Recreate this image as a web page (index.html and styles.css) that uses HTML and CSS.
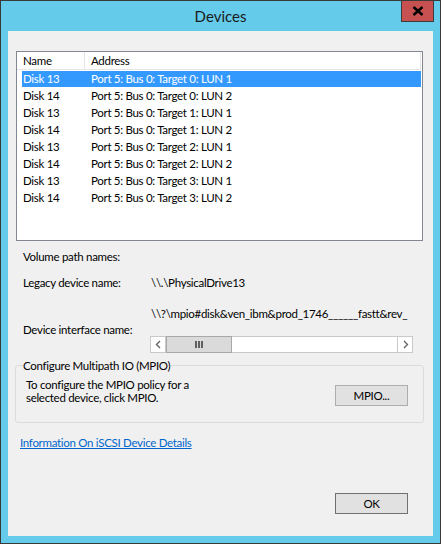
FILE: index.html
```html
<!DOCTYPE html>
<html>
<head>
<meta charset="utf-8">
<link rel="stylesheet" href="styles.css">
</head>
<body>
<div class="window">
  <div class="titlebar">
    <span class="title">Devices</span>
    <div class="close">
      <svg width="12" height="10" viewBox="0 0 12 10"><path d="M1.5 1 L10.5 9 M10.5 1 L1.5 9" stroke="#000" stroke-width="2.4" fill="none"/></svg>
    </div>
  </div>
  <div class="client">
    <div class="list">
      <div class="lv-head">
        <div class="hc c1">Name</div>
        <div class="hc c2">Address</div>
      </div>
      <div class="lv-body">
        <div class="row sel"><span class="n">Disk 13</span><span class="a">Port 5: Bus 0: Target 0: LUN 1</span></div>
        <div class="row"><span class="n">Disk 14</span><span class="a">Port 5: Bus 0: Target 0: LUN 2</span></div>
        <div class="row"><span class="n">Disk 13</span><span class="a">Port 5: Bus 0: Target 1: LUN 1</span></div>
        <div class="row"><span class="n">Disk 14</span><span class="a">Port 5: Bus 0: Target 1: LUN 2</span></div>
        <div class="row"><span class="n">Disk 13</span><span class="a">Port 5: Bus 0: Target 2: LUN 1</span></div>
        <div class="row"><span class="n">Disk 14</span><span class="a">Port 5: Bus 0: Target 2: LUN 2</span></div>
        <div class="row"><span class="n">Disk 13</span><span class="a">Port 5: Bus 0: Target 3: LUN 1</span></div>
        <div class="row"><span class="n">Disk 14</span><span class="a">Port 5: Bus 0: Target 3: LUN 2</span></div>
      </div>
    </div>

    <div class="lbl vol">Volume path names:</div>

    <div class="kv legacy">
      <span class="k">Legacy device name:</span>
      <span class="v">\\.\PhysicalDrive13</span>
    </div>

    <div class="kv devif">
      <span class="k">Device interface name:</span>
      <div class="vcol">
        <div class="v clip">\\?\mpio#disk&amp;ven_ibm&amp;prod_1746______fastt&amp;rev_</div>
        <div class="hscroll">
          <div class="sb-btn">
            <svg width="7" height="9" viewBox="0 0 7 9"><path d="M5 1 L1.5 4.5 L5 8" stroke="#606060" stroke-width="1.3" fill="none"/></svg>
          </div>
          <div class="thumb">
            <span class="grip"></span><span class="grip"></span><span class="grip"></span>
          </div>
          <div class="track"></div>
          <div class="sb-btn right">
            <svg width="7" height="9" viewBox="0 0 7 9"><path d="M2 1 L5.5 4.5 L2 8" stroke="#606060" stroke-width="1.3" fill="none"/></svg>
          </div>
        </div>
      </div>
    </div>

    <fieldset class="group">
      <legend>Configure Multipath IO (MPIO)</legend>
      <div class="grp-body">
        <p class="grp-text">To configure the MPIO policy for a<br>selected device, click MPIO.</p>
        <button class="btn mpio">MPIO...</button>
      </div>
    </fieldset>

    <a class="link" href="#">Information On iSCSI Device Details</a>

    <button class="btn ok">OK</button>
  </div>
</div>
</body>
</html>
```

FILE: styles.css
```css
* { box-sizing: border-box; }

html, body {
  margin: 0;
  padding: 0;
  width: 441px;
  height: 544px;
  overflow: hidden;
}

body {
  font-family: "Lato", "Liberation Sans", sans-serif;
  font-size: 11.5px;
  letter-spacing: -0.3px;
  color: #000;
}

.window {
  width: 441px;
  height: 544px;
  border: 1px solid #3a3a3a;
  background: #65cbea;
  display: flex;
  flex-direction: column;
  position: relative;
}

.titlebar {
  height: 30px;
  display: flex;
  align-items: center;
  justify-content: center;
  flex: none;
}

.title {
  font-size: 15px;
  letter-spacing: 0;
  color: #1a1a1a;
  margin-top: -1px;
}

.close {
  position: absolute;
  top: 0;
  right: 6px;
  width: 33px;
  height: 21px;
  background: #c75050;
  border: 1px solid #3c3c3c;
  border-top: none;
  display: flex;
  align-items: center;
  justify-content: center;
}

.client {
  flex: 1;
  margin: 0 7px 7px 7px;
  background: #f0f0f0;
  display: flex;
  flex-direction: column;
}

/* list view */
.list {
  margin: 20px 10px 0 8px;
  height: 190px;
  border: 1px solid #828790;
  background: #fff;
  flex: none;
}

.lv-head {
  display: flex;
  height: 18px;
  border-bottom: 1px solid #e5e5e5;
  margin-right: 1px;
}

.hc {
  line-height: 17px;
  padding-left: 6px;
  border-right: 1px solid #e5e5e5;
}

.hc.c1 { width: 68px; }
.hc.c2 { flex: 1; }

.lv-body {
  padding-top: 1px;
}

.row {
  display: grid;
  grid-template-columns: 63px 1fr;
  height: 16px;
  line-height: 16px;
  margin: 0 1px 1px 5px;
}

.row .n { padding-left: 1px; }
.row .a { padding-left: 6px; }

.row.sel {
  background: #3399ff;
  color: #fff;
}

/* fields */
.lbl {
  line-height: 15px;
  margin-left: 15px;
}

.vol { margin-top: 8px; }

.kv {
  display: grid;
  grid-template-columns: 128px 1fr;
  margin-left: 15px;
  line-height: 15px;
}

.legacy { margin-top: 11px; }

.devif {
  margin-top: 16px;
  align-items: center;
}

.vcol {
  display: flex;
  flex-direction: column;
  width: 263px;
  margin-left: -1px;
}

.clip {
  white-space: nowrap;
  overflow: hidden;
  padding-left: 1px;
}

.hscroll {
  margin-top: 15px;
  height: 17px;
  border: 1px solid #c9c9c9;
  background: #fff;
  display: flex;
}

.sb-btn {
  width: 15px;
  flex: none;
  display: flex;
  align-items: center;
  justify-content: center;
  border-right: 1px solid #c9c9c9;
}

.sb-btn.right {
  border-right: none;
  border-left: 1px solid #c9c9c9;
}

.thumb {
  width: 66px;
  flex: none;
  margin: -1px 0;
  background: #dadada;
  border: 1px solid #a8a8a8;
  display: flex;
  align-items: center;
  justify-content: center;
  gap: 1px;
}

.grip {
  width: 2px;
  height: 7px;
  background: #606060;
}

.track { flex: 1; }

/* group box */
.group {
  margin: 5px 9px 0 7px;
  padding: 0 15px 16px 10px;
  border: 1px solid #dcdcdc;
  border-radius: 3px;
  min-width: 0;
}

.group legend {
  padding: 0;
  margin-left: -3px;
  line-height: 15px;
}

.grp-body {
  display: flex;
  justify-content: space-between;
  align-items: flex-start;
  padding-top: 5px;
}

.grp-text {
  margin: 0;
  line-height: 13px;
}

.btn {
  font-family: inherit;
  font-size: 11.5px;
  letter-spacing: -0.3px;
  color: #000;
  width: 73px;
  height: 21px;
  background: #e1e1e1;
  border: 1px solid #adadad;
  padding: 0;
}

.mpio { margin-top: 7px; }

.link {
  margin: 12px 0 0 12px;
  line-height: 15px;
  color: #0066cc;
  text-decoration: underline;
  align-self: flex-start;
}

.ok {
  margin-top: 43px;
  margin-right: 25px;
  align-self: flex-end;
  border-color: #707070;
}
```
